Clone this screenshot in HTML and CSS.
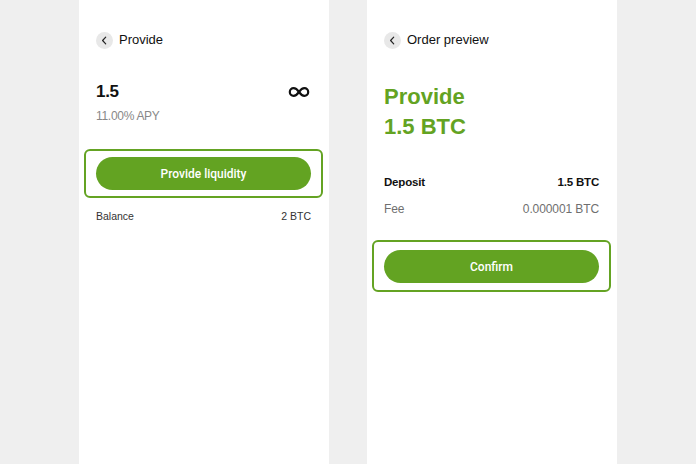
FILE: index.html
```html
<!DOCTYPE html>
<html lang="en">
<head>
<meta charset="utf-8">
<link rel="stylesheet" href="styles.css">
</head>
<body>
<main class="stage">
  <section class="panel">
    <header class="nav">
      <span class="back"><svg width="17" height="17" viewBox="0 0 17 17"><path d="M9.7 5.2 6.6 8.5l3.1 3.3" fill="none" stroke="#222" stroke-width="1.2" stroke-linecap="round" stroke-linejoin="round"/></svg></span>
      <span class="nav-title">Provide</span>
    </header>
    <div class="amount-row">
      <span class="amount">1.5</span>
      <svg class="inf" width="22" height="12" viewBox="0 0 22 12"><path d="M11 6C9.2 3.4 7.6 2.2 5.6 2.2a3.8 3.8 0 0 0 0 7.6c2 0 3.6-1.2 5.4-3.8s3.4-3.8 5.4-3.8a3.8 3.8 0 0 1 0 7.6c-2 0-3.6-1.2-5.4-3.8Z" fill="none" stroke="#111" stroke-width="2.2"/></svg>
    </div>
    <div class="apy">11.00% APY</div>
    <div class="focus focus-left">
      <button class="btn">Provide liquidity</button>
    </div>
    <div class="row small">
      <span>Balance</span><span>2 BTC</span>
    </div>
  </section>

  <section class="panel">
    <header class="nav">
      <span class="back"><svg width="17" height="17" viewBox="0 0 17 17"><path d="M9.7 5.2 6.6 8.5l3.1 3.3" fill="none" stroke="#222" stroke-width="1.2" stroke-linecap="round" stroke-linejoin="round"/></svg></span>
      <span class="nav-title">Order preview</span>
    </header>
    <h1 class="title">Provide<br>1.5 BTC</h1>
    <div class="row deposit">
      <span>Deposit</span><span>1.5 BTC</span>
    </div>
    <div class="row fee">
      <span>Fee</span><span>0.000001 BTC</span>
    </div>
    <div class="focus focus-right">
      <button class="btn">Confirm</button>
    </div>
  </section>
</main>
</body>
</html>
```
FILE: styles.css
```css
* { box-sizing: border-box; }
html, body { margin: 0; padding: 0; }
body {
  background: #efefef;
  font-family: "Liberation Sans", Arial, sans-serif;
  color: #111;
}
.stage {
  display: flex;
  justify-content: center;
  gap: 38px;
  height: 464px;
}
.panel {
  width: 250px;
  height: 464px;
  background: #fff;
  padding: 32px 18px 0 17px;
  display: flex;
  flex-direction: column;
}
.nav {
  display: flex;
  align-items: center;
  gap: 6px;
  height: 16px;
}
.back {
  width: 17px;
  height: 17px;
  flex: none;
  border-radius: 50%;
  background: #e8e8e8;
  display: flex;
}
.nav-title {
  font-size: 13px;
  line-height: 16px;
  color: #111;
}
.amount-row {
  margin-top: 33px;
  display: flex;
  justify-content: space-between;
  align-items: center;
  height: 22px;
}
.amount {
  font-size: 17px;
  font-weight: 700;
  line-height: 22px;
  letter-spacing: -0.3px;
}
.inf { margin-right: 1px; }
.apy {
  margin-top: 5px;
  font-size: 12px;
  line-height: 16px;
  color: #888;
  letter-spacing: -0.3px;
}
.focus {
  margin-left: -12px;
  margin-right: -12px;
  border: 2px solid #64a323;
  border-radius: 6px;
  padding: 6px 10px;
}
.focus-left { margin-top: 25px; }
.focus-right { margin-top: 23px; padding: 8px 10px 7px; }
.btn {
  display: block;
  width: 100%;
  height: 33px;
  border: 0;
  border-radius: 17px;
  background: #63a322;
  color: #fff;
  font-family: Roboto, "Liberation Sans", sans-serif;
  font-size: 12px;
  font-weight: 500;
}
.row {
  display: flex;
  justify-content: space-between;
}
.small {
  margin-top: 11px;
  font-size: 10.5px;
  line-height: 14px;
  color: #333;
}
.title {
  margin: 34px 0 0;
  font-size: 22px;
  line-height: 30px;
  font-weight: 700;
  color: #63a322;
}
.deposit {
  margin-top: 32px;
  font-size: 11.5px;
  line-height: 16px;
  font-weight: 700;
  letter-spacing: -0.2px;
}
.fee {
  margin-top: 11px;
  font-size: 12px;
  line-height: 16px;
  color: #6f6f6f;
  letter-spacing: -0.1px;
}
```
